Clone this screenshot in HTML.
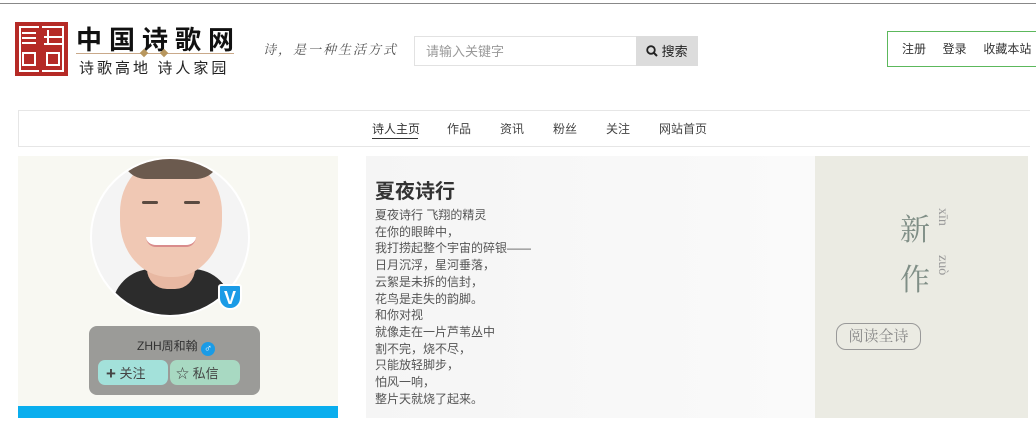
<!DOCTYPE html>
<html><head><meta charset="utf-8"><style>
*{margin:0;padding:0;box-sizing:border-box}
body{width:1036px;height:428px;background:#fff;position:relative;overflow:hidden;font-family:"Liberation Sans","Noto Sans CJK SC",sans-serif;color:#333}
.a{position:absolute}
</style></head><body>
<div class="a" style="left:0;top:3px;width:1036px;height:1px;background:#888"></div>
<!-- logo -->
<div class="a" style="left:15px;top:22px;width:53px;height:54px;background:#b52a26"></div>
<div class="a" style="left:19px;top:26px;width:20px;height:46px;border:2px solid #fff;border-right:none"></div>
<div class="a" style="left:22px;top:32px;width:14px;height:2px;background:#fff;box-shadow:0 5px #fff,0 10px #fff"></div>
<div class="a" style="left:22px;top:52px;width:14px;height:14px;border:2px solid #fff"></div>
<div class="a" style="left:42px;top:26px;width:22px;height:46px;border:2px solid #fff;border-left:none"></div>
<div class="a" style="left:47px;top:30px;width:2px;height:14px;background:#fff"></div>
<div class="a" style="left:44px;top:36px;width:18px;height:2px;background:#fff;box-shadow:0 7px #fff"></div>
<div class="a" style="left:46px;top:52px;width:14px;height:14px;border:2px solid #fff"></div>
<div class="a" style="left:76px;top:20px;font:bold 26px 'Noto Sans CJK SC',sans-serif;letter-spacing:7px;color:#111">中国诗歌网</div>
<div class="a" style="left:76px;top:53px;width:158px;height:1px;background:#c9a98a"></div>
<div class="a" style="left:141px;top:50px;width:6px;height:6px;background:#b8975e;transform:rotate(45deg)"></div>
<div class="a" style="left:161px;top:50px;width:6px;height:6px;background:#b8975e;transform:rotate(45deg)"></div>
<div class="a" style="left:79px;top:57px;font:15px 'Noto Sans CJK SC',sans-serif;letter-spacing:3px;color:#222">诗歌高地 诗人家园</div>
<div class="a" style="left:263px;top:39px;font:italic 13px 'Noto Serif CJK SC',serif;letter-spacing:2px;color:#555">诗，是一种生活方式</div>
<!-- search -->
<div class="a" style="left:414px;top:36px;width:222px;height:30px;border:1px solid #e2e2e2;border-right:none;font-size:13px;color:#999;padding:4px 11px">请输入关键字</div>
<div class="a" style="left:636px;top:36px;width:62px;height:30px;background:#dcdcdc;font-size:13px;color:#222;padding:5px 0 0 10px"><svg width="12" height="12" viewBox="0 0 12 12" style="vertical-align:-1px"><circle cx="5" cy="5" r="3.8" fill="none" stroke="#222" stroke-width="1.8"/><path d="M8 8l3 3" stroke="#222" stroke-width="2"/></svg> 搜索</div>
<div class="a" style="left:887px;top:31px;width:160px;height:36px;border:1px solid #5cb85c;font-size:12px;color:#333;padding:8px 0 0 14px">注册&nbsp;&nbsp;&nbsp;&nbsp;&nbsp;登录&nbsp;&nbsp;&nbsp;&nbsp;&nbsp;收藏本站</div>
<!-- nav -->
<div class="a" style="left:18px;top:110px;width:1012px;height:37px;border:1px solid #e6e6e6;border-right:none"></div>
<div class="a" style="left:372px;top:120px;font-size:12px;color:#333">诗人主页</div>
<div class="a" style="left:372px;top:138px;width:46px;height:1px;background:#333"></div>
<div class="a" style="left:447px;top:120px;font-size:12px;color:#444">作品</div>
<div class="a" style="left:500px;top:120px;font-size:12px;color:#444">资讯</div>
<div class="a" style="left:553px;top:120px;font-size:12px;color:#444">粉丝</div>
<div class="a" style="left:606px;top:120px;font-size:12px;color:#444">关注</div>
<div class="a" style="left:659px;top:120px;font-size:12px;color:#444">网站首页</div>
<!-- left -->
<div class="a" style="left:18px;top:156px;width:320px;height:262px;background:#f8f8f2"></div>
<div class="a" style="left:90px;top:157px;width:160px;height:160px;border-radius:50%;background:#f4f4f4;border:2px solid #fff;overflow:hidden">
  <div class="a" style="left:20px;top:110px;width:120px;height:60px;border-radius:40px 40px 0 0;background:#2c2c2c"></div>
  <div class="a" style="left:55px;top:100px;width:48px;height:30px;background:#e8b8a2;border-radius:0 0 20px 20px"></div>
  <div class="a" style="left:28px;top:0px;width:102px;height:118px;border-radius:45% 45% 48% 48%;background:#f0c8b4"></div>
  <div class="a" style="left:30px;top:-4px;width:98px;height:24px;border-radius:0 0 40px 40px;background:#6b5a4e"></div>
  <div class="a" style="left:50px;top:42px;width:16px;height:3px;background:#5a4a40;border-radius:2px"></div>
  <div class="a" style="left:92px;top:42px;width:16px;height:3px;background:#5a4a40;border-radius:2px"></div>
  <div class="a" style="left:54px;top:78px;width:50px;height:10px;border-radius:0 0 22px 22px;background:#fff;border-bottom:2px solid #d98c8c"></div>
</div>
<div class="a" style="left:218px;top:284px;width:24px;height:26px;background:#1a9be6;border-radius:3px 3px 12px 12px;color:#fff;font:bold 18px 'Liberation Sans';text-align:center;line-height:24px;border:2px solid #fff">V</div>
<div class="a" style="left:89px;top:326px;width:171px;height:69px;background:#9b9b98;border-radius:8px"></div>
<div class="a" style="left:137px;top:337px;font-size:12px;color:#333">ZHH周和翰 <span style="display:inline-block;width:14px;height:14px;border-radius:50%;background:#1a9be6;color:#fff;font-size:11px;line-height:14px;text-align:center;vertical-align:-2px">♂</span></div>
<div class="a" style="left:98px;top:360px;width:70px;height:25px;background:#a3e1da;border-radius:7px;font-size:13px;color:#444;padding:3px 0 0 8px"><b style="font-size:17px;line-height:16px;vertical-align:-1px">+</b> 关注</div>
<div class="a" style="left:170px;top:360px;width:70px;height:25px;background:#a8d9c2;border-radius:7px;font-size:13px;color:#444;padding:3px 0 0 6px">☆ 私信</div>
<div class="a" style="left:18px;top:406px;width:320px;height:12px;background:#0aaeee"></div>
<!-- middle -->
<div class="a" style="left:366px;top:156px;width:449px;height:262px;background:linear-gradient(90deg,#f5f5f5,#fafafa)"></div>
<div class="a" style="left:375px;top:175px;font-size:20px;font-weight:bold;color:#333">夏夜诗行</div>
<div class="a" style="left:375px;top:207px;font-size:12px;line-height:16.7px;color:#555">夏夜诗行 飞翔的精灵<br>在你的眼眸中，<br>我打捞起整个宇宙的碎银——<br>日月沉浮，星河垂落，<br>云絮是未拆的信封，<br>花鸟是走失的韵脚。<br>和你对视<br>就像走在一片芦苇丛中<br>割不完，烧不尽，<br>只能放轻脚步，<br>怕风一响，<br>整片天就烧了起来。</div>
<!-- right -->
<div class="a" style="left:815px;top:156px;width:213px;height:262px;background:#ebebe3"></div>
<div class="a" style="left:900px;top:202px;font:30px 'Noto Serif CJK SC',serif;color:#7f8e86;line-height:50px">新<br>作</div>
<div class="a" style="left:934px;top:208px;font:14px 'Liberation Serif';color:#999;writing-mode:vertical-rl">xīn</div>
<div class="a" style="left:934px;top:255px;font:14px 'Liberation Serif';color:#999;writing-mode:vertical-rl">zuò</div>
<div class="a" style="left:836px;top:323px;width:85px;height:27px;border:1.5px solid #999;border-radius:10px;font:15px 'Noto Serif CJK SC',serif;color:#888;text-align:center;line-height:23px">阅读全诗</div>
</body></html>
